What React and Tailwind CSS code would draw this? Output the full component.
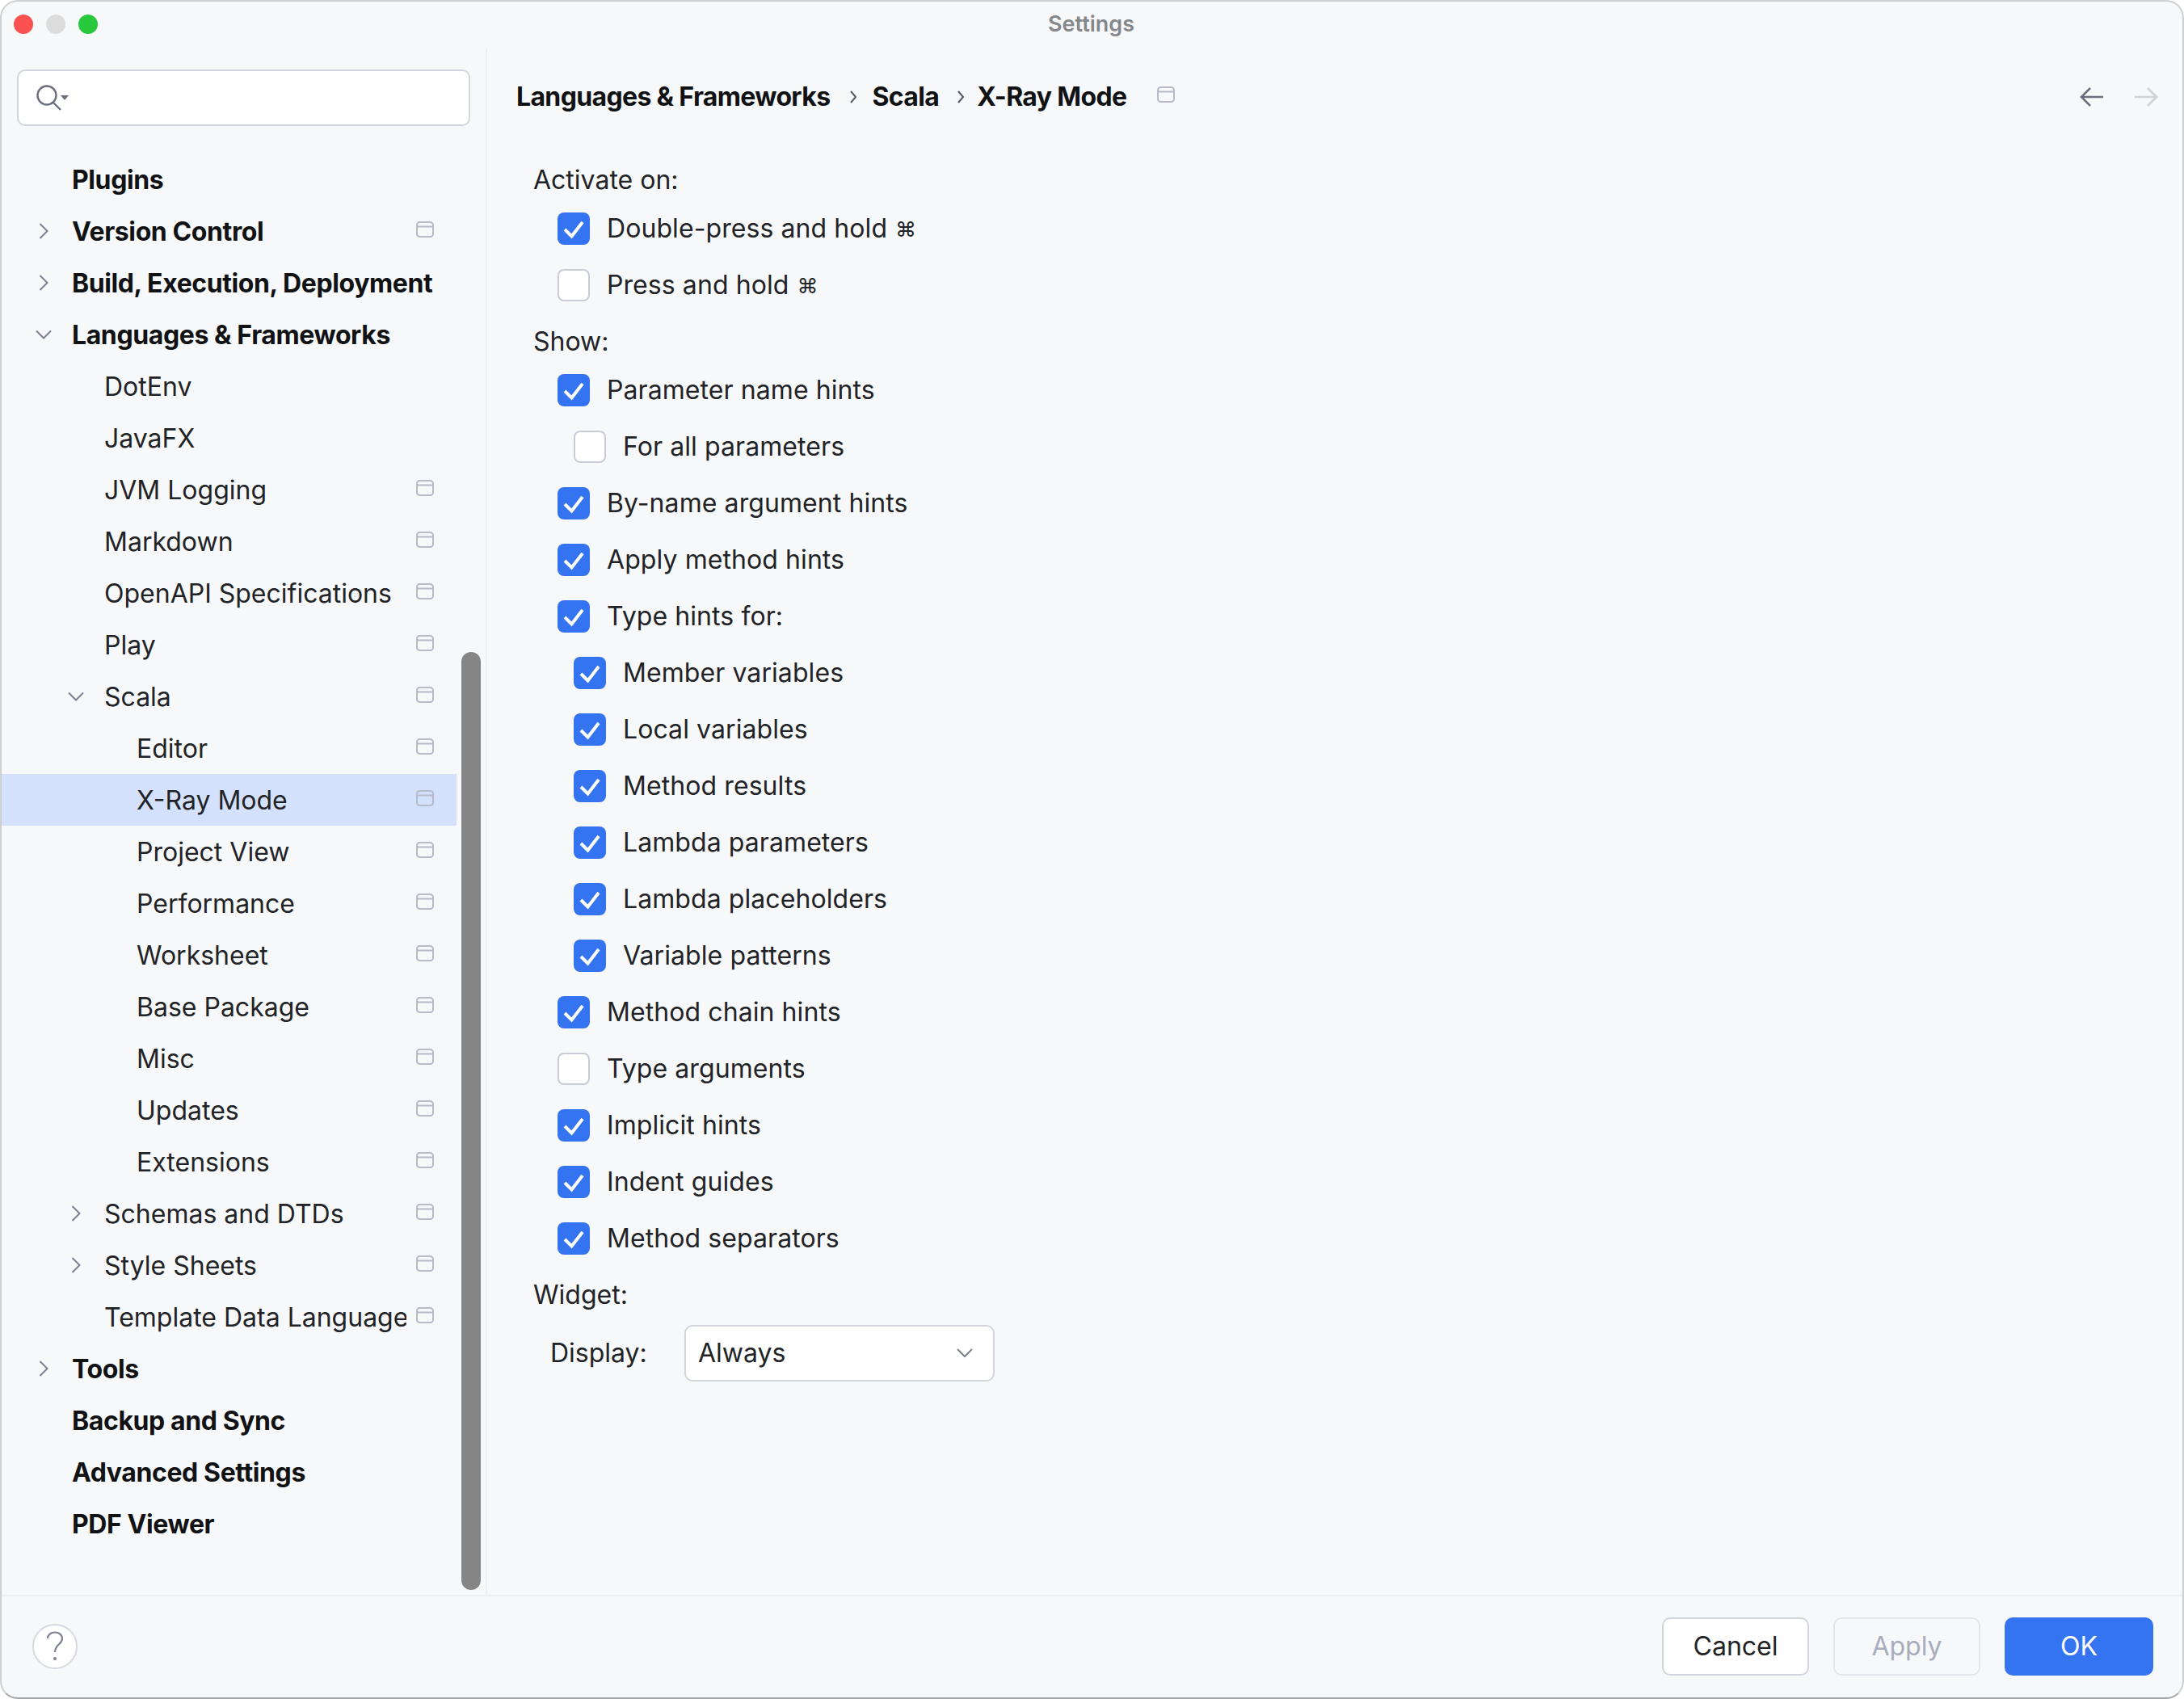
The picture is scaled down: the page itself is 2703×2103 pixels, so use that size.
import React from "react";

const FONT = "font-['Inter','DejaVu_Sans',sans-serif]";

const TREE = [
  { label: "Plugins", level: 0, bold: true },
  { label: "Version Control", level: 0, bold: true, arrow: "right", icon: true },
  { label: "Build, Execution, Deployment", level: 0, bold: true, arrow: "right" },
  { label: "Languages & Frameworks", level: 0, bold: true, arrow: "down" },
  { label: "DotEnv", level: 1 },
  { label: "JavaFX", level: 1 },
  { label: "JVM Logging", level: 1, icon: true },
  { label: "Markdown", level: 1, icon: true },
  { label: "OpenAPI Specifications", level: 1, icon: true },
  { label: "Play", level: 1, icon: true },
  { label: "Scala", level: 1, arrow: "down", icon: true },
  { label: "Editor", level: 2, icon: true },
  { label: "X-Ray Mode", level: 2, icon: true, selected: true },
  { label: "Project View", level: 2, icon: true },
  { label: "Performance", level: 2, icon: true },
  { label: "Worksheet", level: 2, icon: true },
  { label: "Base Package", level: 2, icon: true },
  { label: "Misc", level: 2, icon: true },
  { label: "Updates", level: 2, icon: true },
  { label: "Extensions", level: 2, icon: true },
  { label: "Schemas and DTDs", level: 1, arrow: "right", icon: true },
  { label: "Style Sheets", level: 1, arrow: "right", icon: true },
  { label: "Template Data Languages", level: 1, icon: true },
  { label: "Tools", level: 0, bold: true, arrow: "right" },
  { label: "Backup and Sync", level: 0, bold: true },
  { label: "Advanced Settings", level: 0, bold: true },
  { label: "PDF Viewer", level: 0, bold: true },
];

const INDENT = ["w-[87px]", "w-[127px]", "w-[167px]"];

const ACTIVATE = [
  { label: "Double-press and hold", checked: true, cmd: true },
  { label: "Press and hold", checked: false, cmd: true },
];

const SHOW = [
  { label: "Parameter name hints", checked: true },
  { label: "For all parameters", checked: false, nested: true },
  { label: "By-name argument hints", checked: true },
  { label: "Apply method hints", checked: true },
  { label: "Type hints for:", checked: true },
  { label: "Member variables", checked: true, nested: true },
  { label: "Local variables", checked: true, nested: true },
  { label: "Method results", checked: true, nested: true },
  { label: "Lambda parameters", checked: true, nested: true },
  { label: "Lambda placeholders", checked: true, nested: true },
  { label: "Variable patterns", checked: true, nested: true },
  { label: "Method chain hints", checked: true },
  { label: "Type arguments", checked: false },
  { label: "Implicit hints", checked: true },
  { label: "Indent guides", checked: true },
  { label: "Method separators", checked: true },
];

function ProjectIcon() {
  return (
    <svg width="22" height="20" viewBox="0 0 22 20" fill="none" className="shrink-0">
      <rect x="1" y="1" width="20" height="18" rx="3.5" stroke="#b6bac9" strokeWidth="2" />
      <path d="M1 6.5H21" stroke="#b6bac9" strokeWidth="2" />
    </svg>
  );
}

function Chevron({ dir }) {
  if (dir === "down") {
    return (
      <svg width="24" height="24" viewBox="0 0 24 24" fill="none">
        <path d="M3 7.5L12 16.5L21 7.5" stroke="#7c8090" strokeWidth="2" />
      </svg>
    );
  }
  return (
    <svg width="24" height="24" viewBox="0 0 24 24" fill="none">
      <path d="M7.5 3L16.5 12L7.5 21" stroke="#7c8090" strokeWidth="2" />
    </svg>
  );
}

function TreeRow({ item }) {
  return (
    <div className={`flex items-center h-16 pr-[28px] ${item.selected ? "bg-[#d4e1fd]" : ""}`}>
      <div className={`${INDENT[item.level]} shrink-0 flex justify-end pr-[23px]`}>
        {item.arrow && <Chevron dir={item.arrow} />}
      </div>
      <div className={`min-w-0 flex-1 overflow-hidden whitespace-nowrap pt-[2px] text-[32px] ${item.bold ? "font-bold tracking-[-0.4px] text-[#111214]" : "text-[#222326]"}`}>
        {item.label}
      </div>
      {item.icon && (
        <div className="ml-[12px] mb-[4px]">
          <ProjectIcon />
        </div>
      )}
    </div>
  );
}

function CheckRow({ item }) {
  return (
    <div className={`flex items-center h-10 gap-[21px] ${item.nested ? "ml-[20px]" : ""}`}>
      {item.checked ? (
        <div className="w-10 h-10 rounded-[8px] bg-[#3574f0]">
          <svg width="40" height="40" viewBox="0 0 40 40" fill="none">
            <path d="M9 21L17.5 29.5L31 12" stroke="#ffffff" strokeWidth="4" />
          </svg>
        </div>
      ) : (
        <div className="w-10 h-10 rounded-[8px] bg-white border-2 border-[#c9ccd6]" />
      )}
      <span className="text-[32px] tracking-[0.08px] whitespace-nowrap text-[#222326]">
        {item.label}
        {item.cmd && <span className="ml-[10px] text-[26px] align-[1px]">⌘</span>}
      </span>
    </div>
  );
}

function Group({ title, items }) {
  return (
    <div>
      <div className="h-10 flex items-center pt-[2px] text-[32px] text-[#222326]">{title}</div>
      <div className="mt-[21px] ml-[30px] flex flex-col gap-[30px]">
        {items.map((item) => (
          <CheckRow key={item.label} item={item} />
        ))}
      </div>
    </div>
  );
}

const crumb = "text-[32px] font-bold tracking-[-0.65px] text-[#111214]";

export default function App() {
  return (
    <div className={`${FONT} w-[2703px] h-[2103px] bg-white`}>
      <div className="w-full h-full flex flex-col bg-[#f7f8fa] rounded-[22px] border-2 border-[#cfcfcf] border-b-[#a3a3a3] overflow-hidden">
        {/* title bar */}
        <div className="h-[58px] shrink-0 grid grid-cols-[1fr_auto_1fr] items-center pl-[15px] pr-[17px] pb-[2px]">
          <div className="flex gap-[16px]">
            <div className="w-6 h-6 rounded-full bg-[#fb5151]" />
            <div className="w-6 h-6 rounded-full bg-[#dcdcdc]" />
            <div className="w-6 h-6 rounded-full bg-[#28c83c]" />
          </div>
          <div className="text-[27px] font-semibold text-[#85878a]">Settings</div>
          <div />
        </div>

        <div className="flex-1 min-h-0 flex">
          {/* sidebar */}
          <div className="w-[601px] shrink-0 border-r-2 border-[#eceef2] flex flex-col">
            <div className="mt-[26px] ml-[19px] w-[561px] h-[70px] rounded-[10px] bg-white border-2 border-[#d3d5de] flex items-center pl-[22px]">
              <svg width="42" height="32" viewBox="0 0 42 32" fill="none">
                <circle cx="13" cy="13" r="11.5" stroke="#6c707e" strokeWidth="2.4" />
                <path d="M21 22L30 31" stroke="#6c707e" strokeWidth="2.4" />
                <path d="M30 13H40L35 19Z" fill="#6c707e" />
              </svg>
            </div>
            <div className="flex mt-[34px] flex-1 min-h-0">
              <div className="w-[563px] shrink-0 flex flex-col">
                {TREE.map((item) => (
                  <TreeRow key={item.label} item={item} />
                ))}
              </div>
              <div className="ml-[6px] w-6 mt-[617px] h-[1161px] rounded-full bg-[#858585]" />
            </div>
          </div>

          {/* settings panel */}
          <div className="flex-1 min-w-0 flex flex-col">
            <div className="mt-[30px] h-[60px] flex items-center pl-[36px] pr-[30px] shrink-0">
              <span className={crumb}>Languages & Frameworks</span>
              <svg width="10" height="20" viewBox="0 0 10 20" fill="none" className="ml-[24px] mr-[18px]">
                <path d="M2 3L8 10L2 17" stroke="#555864" strokeWidth="2" />
              </svg>
              <span className={crumb}>Scala</span>
              <svg width="10" height="20" viewBox="0 0 10 20" fill="none" className="ml-[22px] mr-[15px]">
                <path d="M2 3L8 10L2 17" stroke="#555864" strokeWidth="2" />
              </svg>
              <span className={crumb}>X-Ray Mode</span>
              <div className="ml-[38px] mb-[6px]">
                <ProjectIcon />
              </div>
              <div className="ml-auto flex gap-[38px]">
                <svg width="30" height="26" viewBox="0 0 30 26" fill="none">
                  <path d="M30 13H3M14 2L3 13L14 24" stroke="#6c707e" strokeWidth="2.6" />
                </svg>
                <svg width="30" height="26" viewBox="0 0 30 26" fill="none" className="translate-x-[1px]">
                  <path d="M0 13H27M16 2L27 13L16 24" stroke="#cfd1d6" strokeWidth="2.6" />
                </svg>
              </div>
            </div>

            <div className="mt-[52px] pl-[57px] flex flex-col gap-[29px]">
              <Group title="Activate on:" items={ACTIVATE} />
              <Group title="Show:" items={SHOW} />
              <div>
                <div className="h-10 flex items-center pt-[2px] text-[32px] text-[#222326]">Widget:</div>
                <div className="mt-[18px] ml-[21px] flex items-center text-[32px] text-[#222326]">
                  <span className="w-[166px]">Display:</span>
                  <div className="w-[384px] h-[70px] rounded-[10px] bg-white border-2 border-[#d3d5de] flex items-center justify-between pl-[15px] pr-[24px]">
                    <span>Always</span>
                    <svg width="22" height="14" viewBox="0 0 22 14" fill="none">
                      <path d="M2 2L11 11L20 2" stroke="#7c8090" strokeWidth="2" />
                    </svg>
                  </div>
                </div>
              </div>
            </div>
          </div>
        </div>

        {/* footer */}
        <div className="h-[127px] shrink-0 border-t-2 border-[#eceef2] flex items-center pl-[38px] pr-[36px] pb-[2px]">
          <div className="w-14 h-14 rounded-full bg-white border-2 border-[#d8dae2] flex items-center justify-center">
            <svg width="24" height="38" viewBox="0 0 24 38" fill="none">
              <path d="M3 9C3 4.5 7 1.5 12 1.5C17 1.5 21 4.5 21 9.5C21 16 12 16.5 12 26" stroke="#7c8090" strokeWidth="2.2" />
              <circle cx="12" cy="34" r="2" fill="#7c8090" />
            </svg>
          </div>
          <div className="ml-auto flex gap-[30px] text-[32px]">
            <div className="w-[182px] h-[72px] rounded-[10px] bg-white border-2 border-[#d3d5de] flex items-center justify-center text-[#222326]">Cancel</div>
            <div className="w-[182px] h-[72px] rounded-[10px] border-2 border-[#e3e5ea] flex items-center justify-center text-[#a8adbd]">Apply</div>
            <div className="w-[184px] h-[72px] rounded-[10px] bg-[#3574f0] flex items-center justify-center text-white">OK</div>
          </div>
        </div>
      </div>
    </div>
  );
}
